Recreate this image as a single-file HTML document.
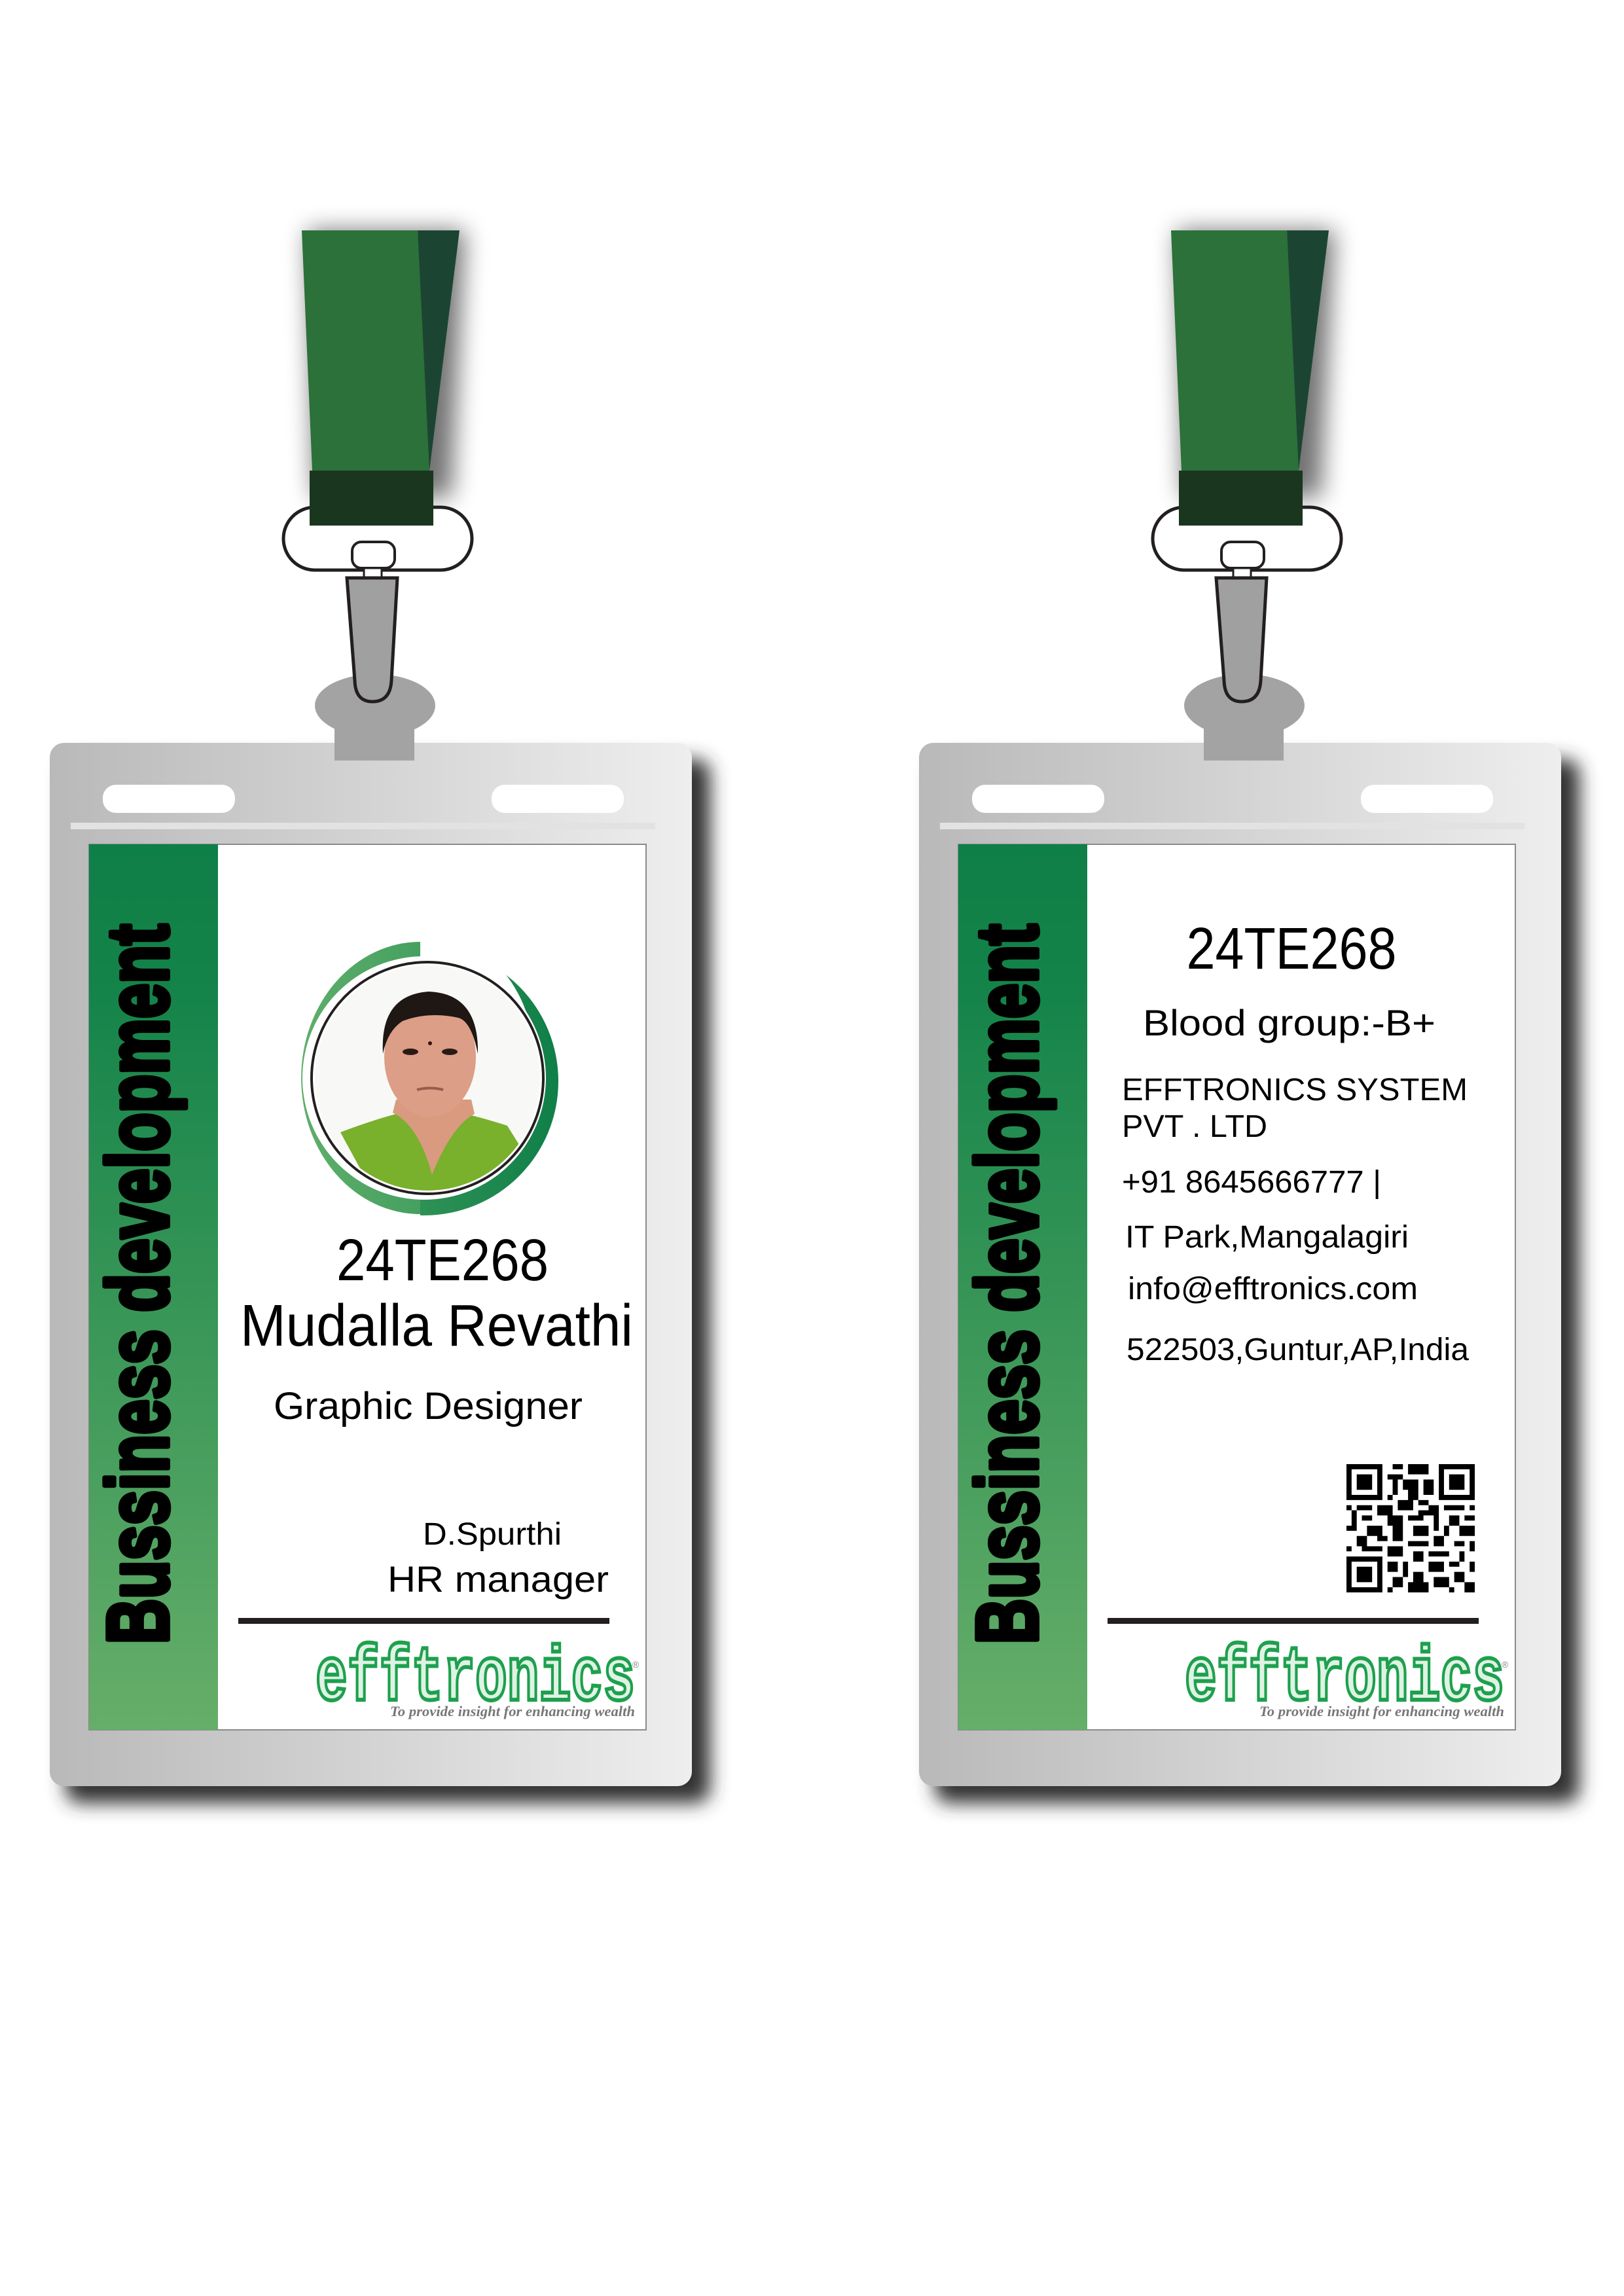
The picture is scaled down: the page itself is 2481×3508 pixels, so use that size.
<!DOCTYPE html>
<html><head><meta charset="utf-8"><style>
html,body{margin:0;padding:0;background:#fff;}
svg{display:block;}
text{font-family:"Liberation Sans",sans-serif;}
</style></head><body>
<svg xmlns="http://www.w3.org/2000/svg" width="2481" height="3508" viewBox="0 0 2481 3508">
<defs>
<linearGradient id="hold" x1="0" x2="1" y1="0" y2="0"><stop offset="0" stop-color="#b9b9b9"/><stop offset="1" stop-color="#eeeeee"/></linearGradient>
<linearGradient id="band" x1="0" x2="0" y1="0" y2="1"><stop offset="0" stop-color="#0f7f48"/><stop offset="0.15" stop-color="#138349"/><stop offset="1" stop-color="#66ae69"/></linearGradient>
<linearGradient id="arcL" x1="0" x2="1"><stop offset="0" stop-color="#5fae6a"/><stop offset="1" stop-color="#45a060"/></linearGradient>
<linearGradient id="arcR" x1="0" x2="1"><stop offset="0" stop-color="#4ca362"/><stop offset="1" stop-color="#0f7f48"/></linearGradient>
<filter id="sh" x="-20%" y="-20%" width="140%" height="140%"><feGaussianBlur stdDeviation="14"/></filter>
<filter id="sh2" x="-50%" y="-20%" width="200%" height="140%"><feGaussianBlur stdDeviation="18"/></filter>
<clipPath id="photoclip"><circle cx="653" cy="1647" r="172"/></clipPath>
<clipPath id="rightclip"><rect x="642" y="1400" width="300" height="500"/></clipPath>
<g id="card">
  <polygon points="470,352 710,352 690,760 480,760" fill="#000" opacity="0.55" filter="url(#sh2)"/>
  <rect x="100" y="1160" width="985" height="1595" rx="22" fill="#333" filter="url(#sh)"/>
  <polygon points="461,352 638,352 656,719 477,719" fill="#2b7139"/>
  <polygon points="638,352 702,352 656,719" fill="#1b4532"/>
  <rect x="433" y="775" width="288" height="96" rx="48" fill="#fff" stroke="#231f20" stroke-width="5"/>
  <rect x="473" y="719" width="189" height="84" fill="#1b361e"/>
  <rect x="538" y="828" width="65" height="40" rx="14" fill="#fff" stroke="#231f20" stroke-width="4"/>
  <rect x="556" y="868" width="27" height="15" fill="#fff" stroke="#231f20" stroke-width="3"/>
  <rect x="76" y="1135" width="981" height="1594" rx="22" fill="url(#hold)"/>
  <ellipse cx="573" cy="1078" rx="92" ry="48" fill="#a3a3a3"/>
  <rect x="511" y="1100" width="122" height="62" fill="#a3a3a3"/>
  <path d="M530,883 L607,883 L598,1040 Q596,1072 569,1072 Q543,1072 542,1040 Z" fill="#a0a0a0" stroke="#231f20" stroke-width="5"/>
  <rect x="157" y="1199" width="202" height="43" rx="20" fill="#fff"/>
  <rect x="751" y="1199" width="202" height="43" rx="20" fill="#fff"/>
  <rect x="108" y="1257" width="893" height="10" fill="#e2e2e2"/>
  <rect x="136" y="1290" width="851" height="1353" fill="#fff" stroke="#8a8a8a" stroke-width="2"/>
  <rect x="136" y="1290" width="197" height="1353" fill="url(#band)"/>
  <text transform="translate(256,2512) rotate(-90)" font-size="132" font-weight="bold" fill="#000" stroke="#000" stroke-width="8" stroke-linejoin="round" textLength="1100" lengthAdjust="spacingAndGlyphs" style="font-family:'Liberation Sans Narrow','Liberation Sans',sans-serif">Bussiness development</text>
  <rect x="364" y="2472" width="567" height="9" fill="#231f20"/>
  <text x="482" y="2597" font-size="118" font-weight="bold" fill="#dff3e4" stroke="#1ea04e" stroke-width="6" textLength="488" lengthAdjust="spacingAndGlyphs" style="font-family:'Liberation Mono',monospace">efftronics</text>
  <text x="966" y="2548" font-size="14" fill="#888">®</text>
  <text x="596" y="2622" font-size="22" font-style="italic" font-weight="bold" fill="#777" textLength="374" lengthAdjust="spacingAndGlyphs" style="font-family:'Liberation Serif',serif">To provide insight for enhancing wealth</text>
</g>
</defs>

<use href="#card"/>
<use href="#card" transform="translate(1328,0)"/>

<circle cx="648" cy="1652" r="205" fill="url(#arcR)" clip-path="url(#rightclip)"/>
<circle cx="615" cy="1612" r="200" fill="#fff"/>
<path d="M642,1439 A182,208 0 0 0 642,1855 Z" fill="url(#arcL)"/>
<circle cx="648" cy="1647" r="186" fill="#fff"/>
<circle cx="653" cy="1647" r="177" fill="#fff" stroke="#231f20" stroke-width="4"/>
<g clip-path="url(#photoclip)">
  <rect x="470" y="1460" width="370" height="380" fill="#f8f8f6"/>
  <path d="M520,1730 Q600,1700 640,1695 L680,1695 Q730,1705 775,1720 L800,1760 L720,1840 L580,1840 Z" fill="#79b02c"/>
  <path d="M600,1700 Q640,1720 660,1795 Q690,1720 725,1702 L720,1680 L605,1680 Z" fill="#d99a7f"/>
  <ellipse cx="657" cy="1615" rx="70" ry="92" fill="#dc9e86"/>
  <path d="M585,1610 Q580,1520 655,1515 Q732,1518 730,1610 Q720,1560 700,1555 Q655,1545 615,1560 Q592,1575 585,1610 Z" fill="#1e1714"/>
  <ellipse cx="627" cy="1607" rx="12" ry="5" fill="#2a1a16"/>
  <ellipse cx="687" cy="1607" rx="12" ry="5" fill="#2a1a16"/>
  <circle cx="657" cy="1594" r="3" fill="#3a0f0f"/>
  <path d="M637,1665 Q657,1660 677,1665" stroke="#9b5a4c" stroke-width="4" fill="none"/>
</g>
<text x="676" y="1956" font-size="90" text-anchor="middle" textLength="324" lengthAdjust="spacingAndGlyphs">24TE268</text>
<text x="367" y="2056" font-size="90" textLength="600" lengthAdjust="spacingAndGlyphs">Mudalla Revathi</text>
<text x="418" y="2168" font-size="58" textLength="472" lengthAdjust="spacingAndGlyphs">Graphic Designer</text>
<text x="646" y="2360" font-size="48" textLength="212" lengthAdjust="spacingAndGlyphs">D.Spurthi</text>
<text x="592" y="2432" font-size="56" textLength="338" lengthAdjust="spacingAndGlyphs">HR manager</text>

<text x="1973" y="1480" font-size="90" text-anchor="middle" textLength="321" lengthAdjust="spacingAndGlyphs">24TE268</text>
<text x="1746" y="1582" font-size="56" textLength="447" lengthAdjust="spacingAndGlyphs">Blood group:-B+</text>
<text x="1714" y="1681" font-size="48" textLength="528" lengthAdjust="spacingAndGlyphs">EFFTRONICS SYSTEM</text>
<text x="1714" y="1737" font-size="48" textLength="222" lengthAdjust="spacingAndGlyphs">PVT . LTD</text>
<text x="1714" y="1822" font-size="48" textLength="396" lengthAdjust="spacingAndGlyphs">+91 8645666777 |</text>
<text x="1719" y="1906" font-size="48" textLength="433" lengthAdjust="spacingAndGlyphs">IT Park,Mangalagiri</text>
<text x="1723" y="1985" font-size="48" textLength="443" lengthAdjust="spacingAndGlyphs">info@efftronics.com</text>
<text x="1721" y="2078" font-size="48" textLength="523" lengthAdjust="spacingAndGlyphs">522503,Guntur,AP,India</text>
<g transform="translate(2057,2237) scale(7.84)">
  <path fill="#000" fill-rule="evenodd" d="M0,0h7v7h-7zM1,1v5h5v-5zM2,2h3v3h-3z M18,0h7v7h-7zM19,1v5h5v-5zM20,2h3v3h-3z M0,18h7v7h-7zM1,19v5h5v-5zM2,20h3v3h-3z"/>
  <path fill="#000" d="M9,0h2v1h-2zM12,0h4v2h-4zM8,2h3v1h-3zM9,3h1v3h-1zM11,3h3v2h-3zM15,3h2v3h-2zM12,5h2v2h-2zM8,6h1v1h-1zM10,7h3v2h-3zM14,7h2v1h-2z
  M0,8h1v1h-1zM2,8h3v1h-3zM6,8h3v2h-3zM16,8h2v2h-2zM19,8h4v1h-4zM24,8h1v1h-1zM1,9h1v3h-1zM3,10h2v1h-2zM8,10h3v2h-3zM12,10h3v1h-3zM17,10h1v3h-1zM20,10h2v2h-2zM23,10h2v1h-2z
  M0,12h2v1h-2zM4,12h3v2h-3zM9,12h2v3h-2zM13,12h3v2h-3zM19,12h1v2h-1zM22,12h3v2h-3zM2,14h2v2h-2zM6,14h2v1h-2zM12,15h4v1h-4zM17,14h2v2h-2zM21,15h2v1h-2zM24,15h1v2h-1z
  M0,16h1v1h-1zM3,16h4v1h-4zM8,16h3v2h-3zM13,17h2v2h-2zM16,17h4v1h-4zM22,17h1v2h-1zM8,19h2v2h-2zM11,19h1v3h-1zM16,19h3v2h-3zM20,19h2v1h-2zM24,19h1v2h-1zM9,22h2v2h-2zM13,21h2v2h-2zM17,22h3v2h-3zM21,21h2v2h-2zM8,24h1v1h-1zM12,23h4v2h-4zM23,23h2v2h-2zM20,24h1v1h-1zM10,16h1v1h-1zM14,9h2v1h-2z"/>
</g>
</svg>
</body></html>
